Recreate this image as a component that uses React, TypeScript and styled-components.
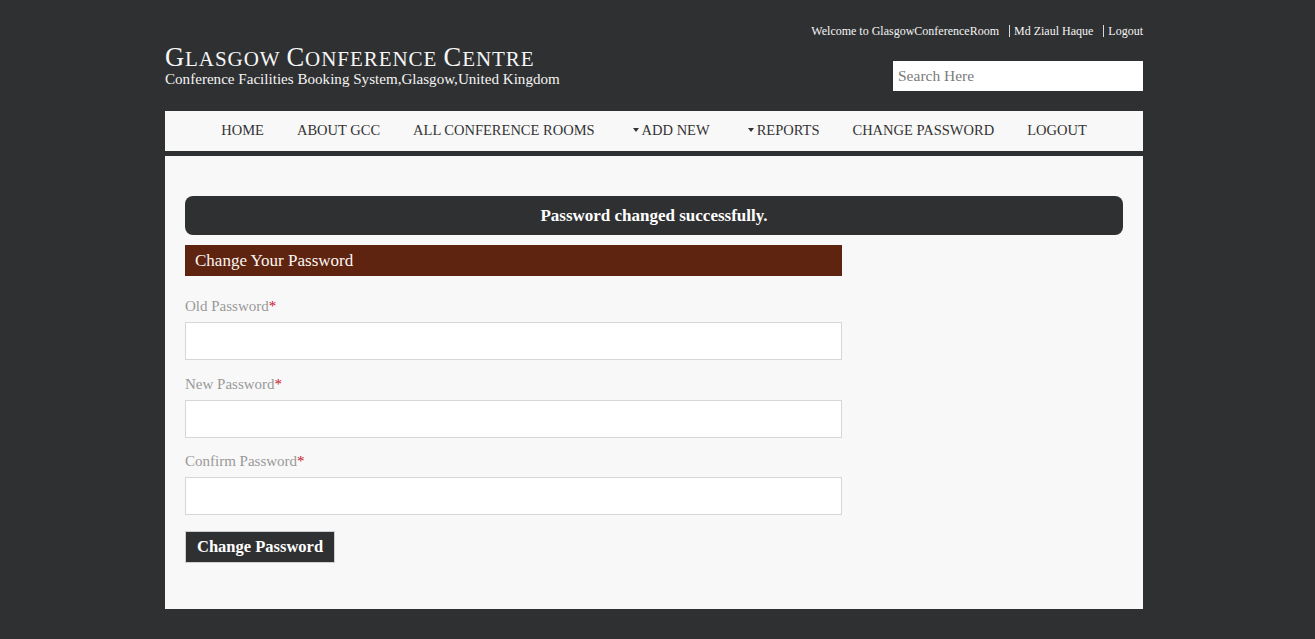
import React from "react";
import styled, { createGlobalStyle } from "styled-components";

const GlobalStyle = createGlobalStyle`
  html, body {
    margin: 0;
    padding: 0;
    background: #2f3032;
  }
  body {
    font-family: "Liberation Serif", "Times New Roman", serif;
    min-height: 639px;
  }
  * { box-sizing: border-box; }
`;

const Shell = styled.div`
  padding-right: 7px;
`;

const Page = styled.div`
  width: 978px;
  margin: 0 auto;
`;

const Header = styled.header`
  display: flex;
  justify-content: space-between;
  align-items: flex-start;
  padding: 22px 0 20px;
`;

const Brand = styled.div`
  margin-top: 23px;
  color: #f4f4f4;
`;

const Title = styled.h1`
  margin: 0;
  font-weight: normal;
  font-size: 21px;
  line-height: 24px;
  letter-spacing: 0.95px;
  text-transform: uppercase;
  color: #f6f6f6;
`;

const Initial = styled.span`
  font-size: 26.5px;
`;

const Subtitle = styled.div`
  font-size: 15.1px;
  line-height: 16px;
  color: #f4f4f4;
`;

const Side = styled.div`
  display: flex;
  flex-direction: column;
  align-items: flex-end;
`;

const TopLinks = styled.div`
  display: flex;
  align-items: center;
  height: 18px;
  font-size: 12px;
  color: #f4f4f4;
`;

const TopLink = styled.a<{ $sep?: boolean }>`
  color: #f4f4f4;
  text-decoration: none;
  line-height: 12px;
  ${(p) =>
    p.$sep
      ? `margin-left: 10px; padding-left: 4px; border-left: 1px solid #d8d8d8;`
      : ""}
`;

const Search = styled.input`
  margin-top: 21px;
  width: 250px;
  height: 30px;
  border: none;
  outline: none;
  padding: 0 5px;
  font-family: "Liberation Serif", "Times New Roman", serif;
  font-size: 15.5px;
  color: #555;
  background: #fff;
  &::placeholder { color: #7a7a7a; }
`;

const Nav = styled.nav`
  display: flex;
  justify-content: center;
  align-items: center;
  height: 40px;
  padding-bottom: 2px;
  background: #f8f8f8;
  margin-bottom: 5px;
`;

const NavItem = styled.a<{ $dropdown?: boolean }>`
  display: flex;
  align-items: center;
  padding: 0 16.5px 0 ${(p) => (p.$dropdown ? "21.5px" : "16.5px")};
  font-size: 14.5px;
  color: #333;
  text-decoration: none;
  text-transform: uppercase;
  white-space: nowrap;
`;

const Caret = styled.span`
  display: inline-block;
  width: 0;
  height: 0;
  margin-right: 3px;
  border-top: 4px solid #333;
  border-left: 3.5px solid transparent;
  border-right: 3.5px solid transparent;
`;

const Content = styled.main`
  background: #f8f8f8;
  padding: 40px 20px 46px;
`;

const Alert = styled.div`
  height: 39px;
  border-radius: 8px;
  background: #2f3032;
  color: #fff;
  font-weight: bold;
  font-size: 17px;
  display: flex;
  align-items: center;
  justify-content: center;
`;

const FormCol = styled.div`
  width: 657px;
  margin-top: 10px;
`;

const PanelHeading = styled.h2`
  margin: 0 0 20px;
  height: 31px;
  padding: 0 10px;
  display: flex;
  align-items: center;
  background: #5f2410;
  color: #fbf6f2;
  font-weight: normal;
  font-size: 17px;
`;

const Field = styled.div`
  display: flex;
  flex-direction: column;
  margin-bottom: 13.5px;
  &:last-of-type { margin-bottom: 16px; }
`;

const Label = styled.label`
  font-size: 15px;
  line-height: 20px;
  color: #999;
  margin-bottom: 6px;
`;

const Req = styled.span`
  color: #c8141b;
`;

const Input = styled.input`
  height: 38px;
  width: 100%;
  border: 1px solid #d6d6d6;
  background: #fff;
  outline: none;
  padding: 0 8px;
  font-size: 15px;
`;

const Button = styled.button`
  height: 32px;
  padding: 0 11px;
  background: #2f3032;
  color: #fff;
  border: 1px solid #cfcfcf;
  font-family: "Liberation Serif", "Times New Roman", serif;
  font-weight: bold;
  font-size: 16.5px;
  cursor: pointer;
`;

const navItems: { label: string; dropdown?: boolean }[] = [
  { label: "Home" },
  { label: "About GCC" },
  { label: "All Conference Rooms" },
  { label: "Add New", dropdown: true },
  { label: "Reports", dropdown: true },
  { label: "Change Password" },
  { label: "Logout" },
];

const fields = ["Old Password", "New Password", "Confirm Password"];

const TitleWord = ({ w }: { w: string }) => (
  <>
    <Initial>{w[0]}</Initial>
    {w.slice(1)}
  </>
);

export default function App() {
  return (
    <Shell>
      <GlobalStyle />
      <Page>
        <Header>
          <Brand>
            <Title>
              <TitleWord w="Glasgow" /> <TitleWord w="Conference" />{" "}
              <TitleWord w="Centre" />
            </Title>
            <Subtitle>
              Conference Facilities Booking System,Glasgow,United Kingdom
            </Subtitle>
          </Brand>
          <Side>
            <TopLinks>
              <TopLink>Welcome to GlasgowConferenceRoom</TopLink>
              <TopLink $sep>Md Ziaul Haque</TopLink>
              <TopLink $sep>Logout</TopLink>
            </TopLinks>
            <Search placeholder="Search Here" />
          </Side>
        </Header>
        <Nav>
          {navItems.map((n) => (
            <NavItem key={n.label} $dropdown={n.dropdown}>
              {n.dropdown && <Caret />}
              {n.label}
            </NavItem>
          ))}
        </Nav>
        <Content>
          <Alert>Password changed successfully.</Alert>
          <FormCol>
            <PanelHeading>Change Your Password</PanelHeading>
            {fields.map((f) => (
              <Field key={f}>
                <Label>
                  {f}
                  <Req>*</Req>
                </Label>
                <Input type="password" />
              </Field>
            ))}
            <Button>Change Password</Button>
          </FormCol>
        </Content>
      </Page>
    </Shell>
  );
}
